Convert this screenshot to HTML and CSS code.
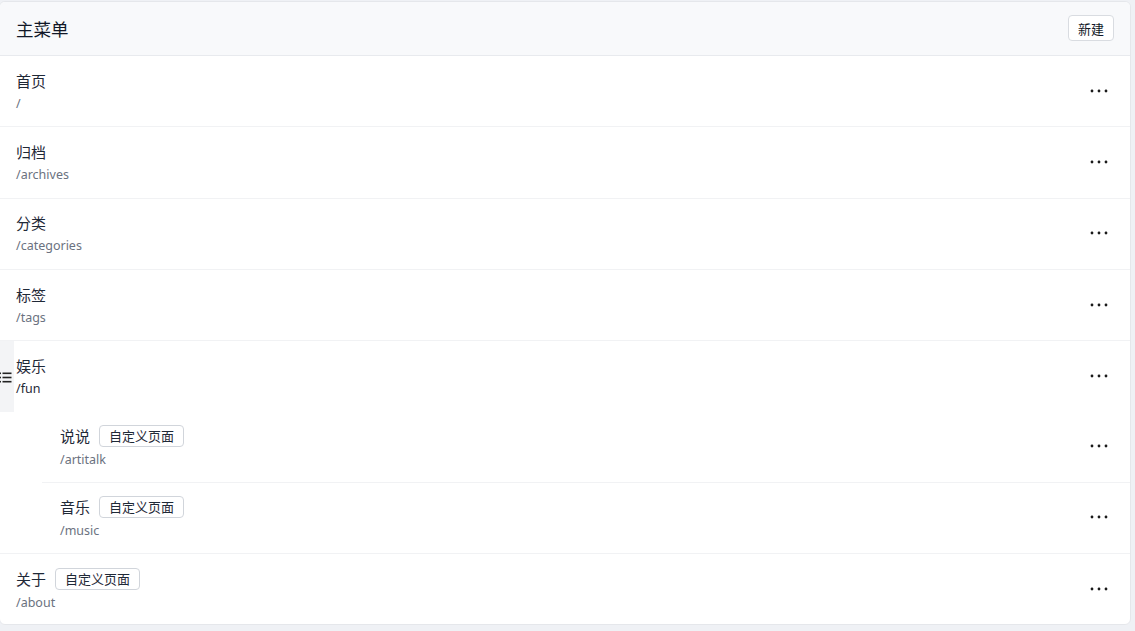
FILE: index.html
```html
<!DOCTYPE html>
<html lang="zh">
<head>
<meta charset="utf-8">
<link rel="stylesheet" href="styles.css">
</head>
<body>
<div class="card">
  <div class="card-header">
    <h2 class="title">主菜单</h2>
    <button class="btn">新建</button>
  </div>
  <ul class="list">
    <li class="row"><div class="info"><div class="name">首页</div><div class="path">/</div></div><svg class="more" width="18" height="4" viewBox="0 0 18 4"><circle cx="2" cy="2" r="1.4"/><circle cx="9" cy="2" r="1.4"/><circle cx="16" cy="2" r="1.4"/></svg></li>
    <li class="row"><div class="info"><div class="name">归档</div><div class="path">/archives</div></div><svg class="more" width="18" height="4" viewBox="0 0 18 4"><circle cx="2" cy="2" r="1.4"/><circle cx="9" cy="2" r="1.4"/><circle cx="16" cy="2" r="1.4"/></svg></li>
    <li class="row"><div class="info"><div class="name">分类</div><div class="path">/categories</div></div><svg class="more" width="18" height="4" viewBox="0 0 18 4"><circle cx="2" cy="2" r="1.4"/><circle cx="9" cy="2" r="1.4"/><circle cx="16" cy="2" r="1.4"/></svg></li>
    <li class="row"><div class="info"><div class="name">标签</div><div class="path">/tags</div></div><svg class="more" width="18" height="4" viewBox="0 0 18 4"><circle cx="2" cy="2" r="1.4"/><circle cx="9" cy="2" r="1.4"/><circle cx="16" cy="2" r="1.4"/></svg></li>
    <li class="row row-active">
      <div class="handle"><svg width="14" height="14" viewBox="0 0 14 14"><rect x="0" y="2.5" width="2" height="1.6" fill="#222"/><rect x="3.5" y="2.5" width="9" height="1.6" fill="#222"/><rect x="0" y="6.7" width="2" height="1.6" fill="#222"/><rect x="3.5" y="6.7" width="9" height="1.6" fill="#222"/><rect x="0" y="10.9" width="2" height="1.6" fill="#222"/><rect x="3.5" y="10.9" width="9" height="1.6" fill="#222"/></svg></div>
      <div class="info"><div class="name">娱乐</div><div class="path path-dark">/fun</div></div><svg class="more" width="18" height="4" viewBox="0 0 18 4"><circle cx="2" cy="2" r="1.4"/><circle cx="9" cy="2" r="1.4"/><circle cx="16" cy="2" r="1.4"/></svg>
    </li>
    <li class="children">
      <ul class="sublist">
        <li class="row child"><div class="info"><div class="name">说说<span class="tag">自定义页面</span></div><div class="path">/artitalk</div></div><svg class="more" width="18" height="4" viewBox="0 0 18 4"><circle cx="2" cy="2" r="1.4"/><circle cx="9" cy="2" r="1.4"/><circle cx="16" cy="2" r="1.4"/></svg></li>
        <li class="row child"><div class="info"><div class="name">音乐<span class="tag">自定义页面</span></div><div class="path">/music</div></div><svg class="more" width="18" height="4" viewBox="0 0 18 4"><circle cx="2" cy="2" r="1.4"/><circle cx="9" cy="2" r="1.4"/><circle cx="16" cy="2" r="1.4"/></svg></li>
      </ul>
    </li>
    <li class="row last"><div class="info"><div class="name">关于<span class="tag">自定义页面</span></div><div class="path">/about</div></div><svg class="more" width="18" height="4" viewBox="0 0 18 4"><circle cx="2" cy="2" r="1.4"/><circle cx="9" cy="2" r="1.4"/><circle cx="16" cy="2" r="1.4"/></svg></li>
  </ul>
</div>
</body>
</html>
```
FILE: styles.css
```css
html, body {
  margin: 0;
  padding: 0;
  background: #eff1f5;
  font-family: "Noto Sans", "Noto Sans CJK SC", sans-serif;
  color: #1f2937;
}
body {
  padding: 1px 3px 0 0;
}
.card {
  margin-left: -1px;
  width: 1130px;
  background: #fff;
  border: 1px solid #e5e7eb;
  border-radius: 6px;
  overflow: hidden;
}
.card-header {
  height: 53px;
  background: #f8f9fb;
  border-bottom: 1px solid #e8eaee;
  display: flex;
  align-items: center;
  justify-content: space-between;
  padding: 0 16px 0 16px;
}
.title {
  margin: 0;
  font-size: 17.5px;
  font-weight: 400;
  color: #111827;
}
.btn {
  height: 26px;
  margin-top: -1px;
  padding: 0 9px;
  font-family: inherit;
  font-size: 13px;
  color: #111827;
  background: #fff;
  border: 1px solid #d9dce1;
  border-radius: 4px;
}
.list, .sublist {
  list-style: none;
  margin: 0;
  padding: 0;
}
.row {
  position: relative;
  height: 70.3px;
  display: flex;
  align-items: center;
  justify-content: space-between;
  padding: 0 22px 0 16px;
  border-bottom: 1px solid #f1f2f4;
}
.row.last {
  border-bottom: none;
}
.info {
  display: flex;
  flex-direction: column;
  gap: 4px;
}
.name {
  font-size: 15px;
  line-height: 20px;
  color: #1f2937;
  display: flex;
  align-items: center;
  margin-top: -1px;
}
.path {
  font-size: 12.5px;
  line-height: 18px;
  color: #6b7280;
  margin-bottom: -2px;
}
.path-dark {
  color: #1f2937;
}
.tag {
  margin-left: 9px;
  height: 20px;
  line-height: 20px;
  padding: 0 9px;
  font-size: 13px;
  color: #1f2937;
  border: 1px solid #d1d5db;
  border-radius: 4px;
}
.more {
  fill: #1a1a1a;
  margin-top: -1px;
}
.row-active {
  border-bottom: none;
}
.handle {
  position: absolute;
  left: 0;
  top: 0;
  width: 14px;
  height: 71px;
  background: #f3f4f6;
  display: flex;
  align-items: center;
}
.handle svg {
  margin-left: -1px;
}
.children {
  border-bottom: 1px solid #f1f2f4;
}
.child {
  margin-left: 42px;
  padding-left: 18px;
}
.sublist .child:last-child {
  border-bottom: none;
}
```
